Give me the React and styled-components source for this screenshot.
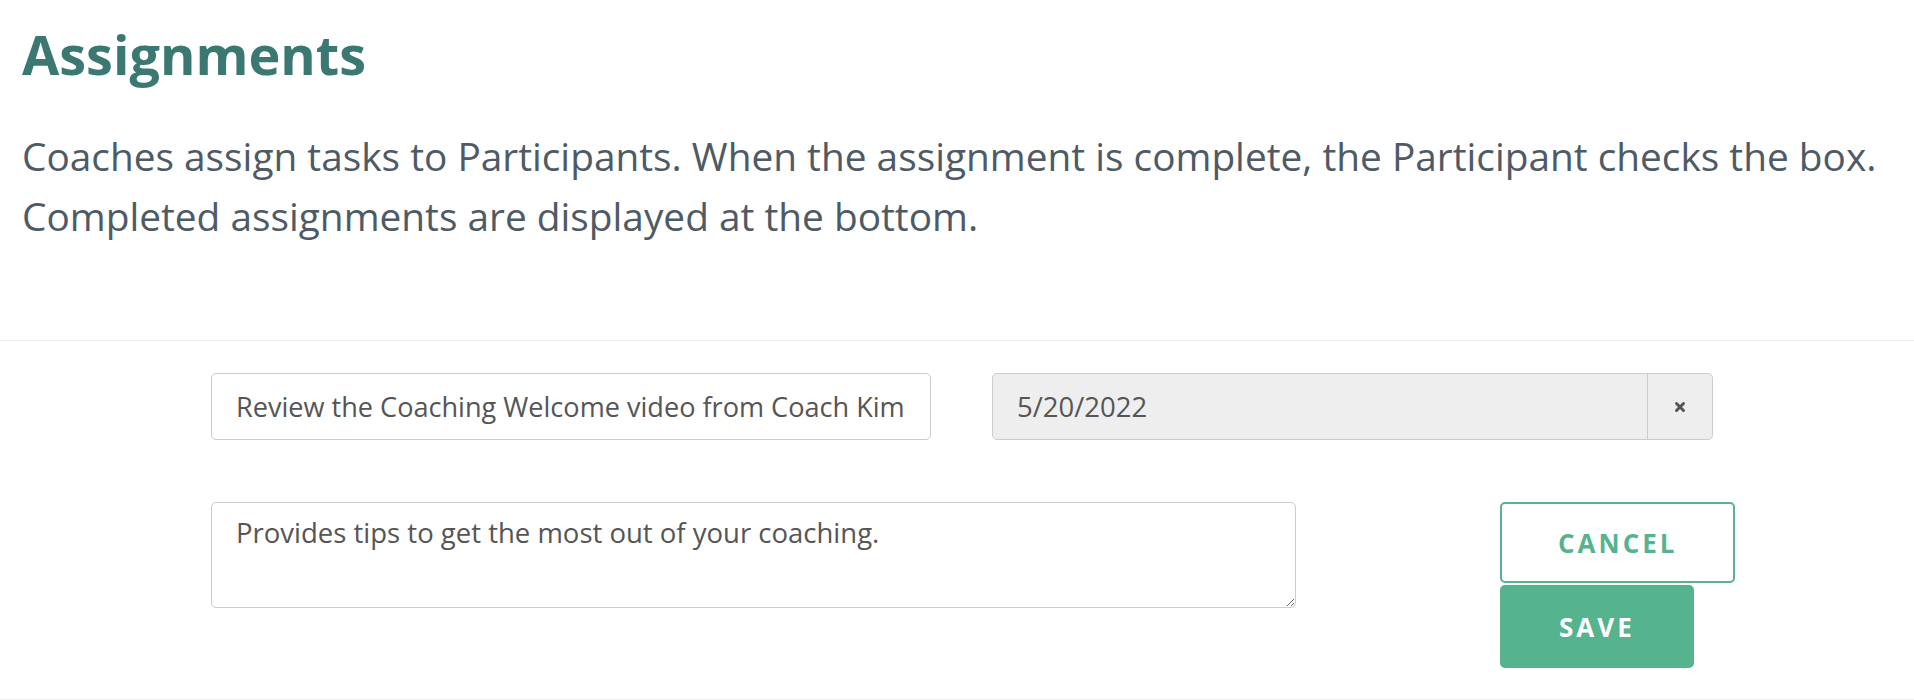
import React from 'react';
import styled, { createGlobalStyle } from 'styled-components';

const GlobalStyle = createGlobalStyle`
  html, body {
    margin: 0;
    padding: 0;
    background: #fff;
  }
  body {
    font-family: "Open Sans", "Noto Sans", sans-serif;
  }
`;

const Page = styled.div`
  width: 1914px;
  height: 700px;
  overflow: hidden;
  box-sizing: border-box;
`;

const Intro = styled.header`
  padding: 0 22px;
  height: 341px;
  box-sizing: border-box;
  border-bottom: 1px solid #eeeeee;
`;

const Title = styled.h1`
  margin: 0;
  padding-top: 16px;
  font-size: 54px;
  line-height: 76px;
  font-weight: 700;
  color: #3b7872;
`;

const Lead = styled.p`
  margin: 34px 0 0;
  font-size: 38.8px;
  line-height: 60px;
  color: #4e5a65;
  max-width: 1888px;
`;

const FormArea = styled.section`
  height: 359px;
  box-sizing: border-box;
  border-bottom: 1px solid #eeeeee;
  padding: 32px 0 0 211px;
  display: flex;
  flex-direction: column;
  gap: 62px;
`;

const Row = styled.div`
  display: flex;
  align-items: flex-start;
  gap: ${p => p.$gap}px;
`;

const TextInput = styled.input`
  box-sizing: border-box;
  width: 720px;
  height: 67px;
  padding: 0 20px 0 24px;
  border: 1.5px solid #cccccc;
  border-radius: 5px;
  font-family: inherit;
  font-size: 27.1px;
  color: #555555;
  background: #fff;
  outline: none;
`;

const DateGroup = styled.div`
  box-sizing: border-box;
  width: 721px;
  height: 67px;
  display: flex;
  border: 1.5px solid #cccccc;
  border-radius: 5px;
  background: #eeeeee;
  overflow: hidden;
`;

const DateValue = styled.div`
  flex: 1;
  display: flex;
  align-items: center;
  padding-left: 24px;
  font-size: 27.5px;
  color: #555555;
`;

const ClearAddon = styled.div`
  width: 64px;
  display: flex;
  align-items: center;
  justify-content: center;
  border-left: 1.5px solid #cccccc;
  color: #555555;
`;

const Notes = styled.textarea`
  box-sizing: border-box;
  width: 1085px;
  height: 106px;
  padding: 12px 24px;
  border: 1.5px solid #cccccc;
  border-radius: 5px;
  font-family: inherit;
  font-size: 27.5px;
  line-height: 36px;
  color: #555555;
  outline: none;
`;

const Actions = styled.div`
  display: flex;
  flex-direction: column;
  align-items: flex-start;
  gap: 2px;
`;

const Button = styled.button`
  box-sizing: border-box;
  height: ${p => (p.$primary ? 83 : 81)}px;
  padding: 0 ${p => (p.$primary ? 57 : 56)}px;
  border: 2px solid #55b38d;
  border-radius: 5px;
  background: ${p => (p.$primary ? '#55b38d' : '#ffffff')};
  color: ${p => (p.$primary ? '#ffffff' : '#55b38d')};
  font-family: inherit;
  font-size: 26px;
  font-weight: 700;
  letter-spacing: 3px;
  cursor: pointer;
`;

const CloseIcon = () => (
  <svg width="12" height="12" viewBox="0 0 12 12">
    <path d="M2.5 2.5 L9.5 9.5 M9.5 2.5 L2.5 9.5" stroke="#555" strokeWidth="3" strokeLinecap="round" />
  </svg>
);

export default function App() {
  return (
    <Page>
      <GlobalStyle />
      <Intro>
        <Title>Assignments</Title>
        <Lead>
          Coaches assign tasks to Participants. When the assignment is complete, the Participant checks the box.
          Completed assignments are displayed at the bottom.
        </Lead>
      </Intro>
      <FormArea>
        <Row $gap={61}>
          <TextInput defaultValue="Review the Coaching Welcome video from Coach Kim" />
          <DateGroup>
            <DateValue>5/20/2022</DateValue>
            <ClearAddon>
              <CloseIcon />
            </ClearAddon>
          </DateGroup>
        </Row>
        <Row $gap={204}>
          <Notes defaultValue="Provides tips to get the most out of your coaching." />
          <Actions>
            <Button>CANCEL</Button>
            <Button $primary>SAVE</Button>
          </Actions>
        </Row>
      </FormArea>
    </Page>
  );
}
